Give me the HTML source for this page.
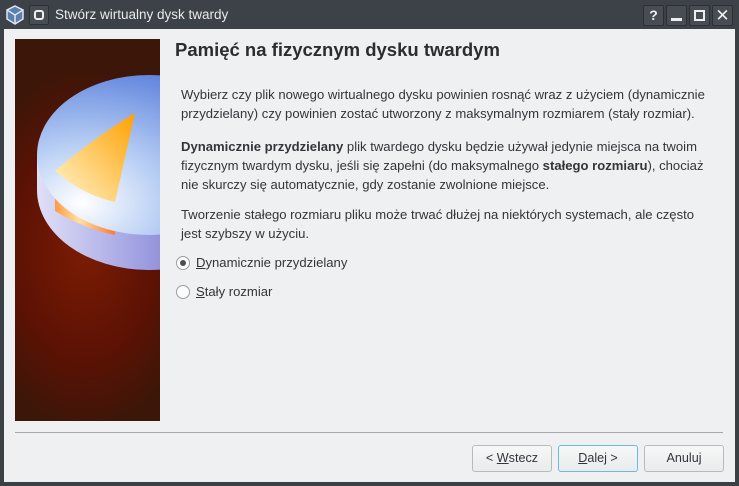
<!DOCTYPE html>
<html><head><meta charset="utf-8"><style>
*{margin:0;padding:0;box-sizing:border-box}
body{width:739px;height:486px;background:#3b4045;font-family:"Liberation Sans","DejaVu Sans",sans-serif;position:relative;overflow:hidden}
.tb{position:absolute;left:0;top:0;width:739px;height:29px;background:#3c4247}
.tt{position:absolute;left:55px;top:7px;color:#e8eaeb;font-size:13.5px}
.content{position:absolute;left:4px;top:29px;width:731px;height:453px;background:#eff0f1}
.wb{position:absolute;top:5px;width:21px;height:21px;border:1px solid #2c3034;background:#474d52;border-radius:2px;color:#eee;font-size:14px;font-weight:bold;text-align:center;line-height:19px}
.img{position:absolute;left:15px;top:39px;width:145px;height:382px;overflow:hidden;
background:radial-gradient(ellipse 120px 180px at 70px 210px,#7c1c04 0%,#5c1204 60%,#3c1608 100%)}
h1{position:absolute;left:175px;top:39px;font-size:18.5px;font-weight:bold;color:#2b2e31}
.p{position:absolute;left:181px;font-size:13.1px;color:#31363b;line-height:19px;white-space:nowrap}
.r{position:absolute;left:176px;font-size:13.1px;color:#31363b;white-space:nowrap}
.rc{display:inline-block;width:14px;height:14px;border:1px solid #9a9ea2;border-radius:50%;background:#fcfcfc;vertical-align:-3px;margin-right:6px;position:relative}
.rc.on::after{content:"";position:absolute;left:3px;top:3px;width:6px;height:6px;border-radius:50%;background:#4d4d4d}
.sep{position:absolute;left:15px;top:432px;width:708px;height:1px;background:#a5a8ab}
.btn{position:absolute;top:445px;height:27px;width:80px;border:1px solid #b8babc;border-radius:3px;background:linear-gradient(#f6f7f7,#eaebec);font-size:12.6px;color:#31363b;text-align:center;line-height:25px}
</style></head><body>
<div class="tb"></div>
<svg style="position:absolute;left:5px;top:5px" width="20" height="20" viewBox="0 0 20 20"><path d="M10 1L18 5V14L10 19L2 14V5Z" fill="#5a7fb0" stroke="#dfe6ee" stroke-width="1.5"/><path d="M2 5L10 10L18 5M10 10V19" stroke="#dfe6ee" stroke-width="1.5" fill="none"/></svg>
<div class="wb" style="left:29px;top:5px;width:20px;height:20px"><div style="width:10px;height:10px;border:2.5px solid #eee;border-radius:3px;margin:4px auto"></div></div>
<div class="tt">Stwórz wirtualny dysk twardy</div>
<div class="wb" style="left:643px">?</div>
<div class="wb" style="left:666px"><div style="width:11px;height:3px;background:#eee;margin:12px auto 0"></div></div>
<div class="wb" style="left:689px"><div style="width:11px;height:11px;border:2px solid #eee;margin:4px auto"></div></div>
<div class="wb" style="left:712px;font-size:17px">✕</div>
<div class="content"></div>
<div class="img"><svg width="145" height="382" viewBox="0 0 145 382">
<defs>
<radialGradient id="tp" cx="0.2" cy="0.8" r="0.9"><stop offset="0" stop-color="#fff"/><stop offset="0.4" stop-color="#b8cff4"/><stop offset="1" stop-color="#5b7fdc"/></radialGradient>
<linearGradient id="sd" x1="0" x2="1"><stop offset="0" stop-color="#e0e0f8"/><stop offset="0.5" stop-color="#9a9ae0"/><stop offset="1" stop-color="#6a4a90"/></linearGradient>
<linearGradient id="or" x1="0" x2="1"><stop offset="0" stop-color="#ff9a40"/><stop offset="0.4" stop-color="#ffe0a0"/><stop offset="1" stop-color="#ff7a30"/></linearGradient>
<linearGradient id="ot" x1="0" y1="1" x2="1" y2="0"><stop offset="0" stop-color="#fff6d0"/><stop offset="1" stop-color="#ffa000"/></linearGradient>
</defs>
<path d="M22 116 L22 151 A112 80 0 0 0 246 151 L246 116Z" fill="url(#sd)"/>
<path d="M40 132 L40 172 Q70 190 100 196 L100 160 Z" fill="url(#or)"/>
<ellipse cx="134" cy="116" rx="112" ry="80" fill="url(#tp)"/>
<path d="M40 132 Q80 98 120 74 L100 163 Q68 156 40 132Z" fill="url(#ot)"/>
</svg></div>
<h1>Pamięć na fizycznym dysku twardym</h1>
<div class="p" style="top:85px">Wybierz czy plik nowego wirtualnego dysku powinien rosnąć wraz z użyciem (dynamicznie<br>przydzielany) czy powinien zostać utworzony z maksymalnym rozmiarem (stały rozmiar).</div>
<div class="p" style="top:137px"><b>Dynamicznie przydzielany</b> plik twardego dysku będzie używał jedynie miejsca na twoim<br>fizycznym twardym dysku, jeśli się zapełni (do maksymalnego <b>stałego rozmiaru</b>), chociaż<br>nie skurczy się automatycznie, gdy zostanie zwolnione miejsce.</div>
<div class="p" style="top:205px">Tworzenie stałego rozmiaru pliku może trwać dłużej na niektórych systemach, ale często<br>jest szybszy w użyciu.</div>
<div class="r" style="top:255px"><span class="rc on"></span><u>D</u>ynamicznie przydzielany</div>
<div class="r" style="top:284px"><span class="rc"></span><u>S</u>tały rozmiar</div>
<div class="sep"></div>
<div class="btn" style="left:472px">&lt; <u>W</u>stecz</div>
<div class="btn" style="left:558px;border-color:#6cb8e6"><u>D</u>alej &gt;</div>
<div class="btn" style="left:644px">Anuluj</div>
</body></html>
